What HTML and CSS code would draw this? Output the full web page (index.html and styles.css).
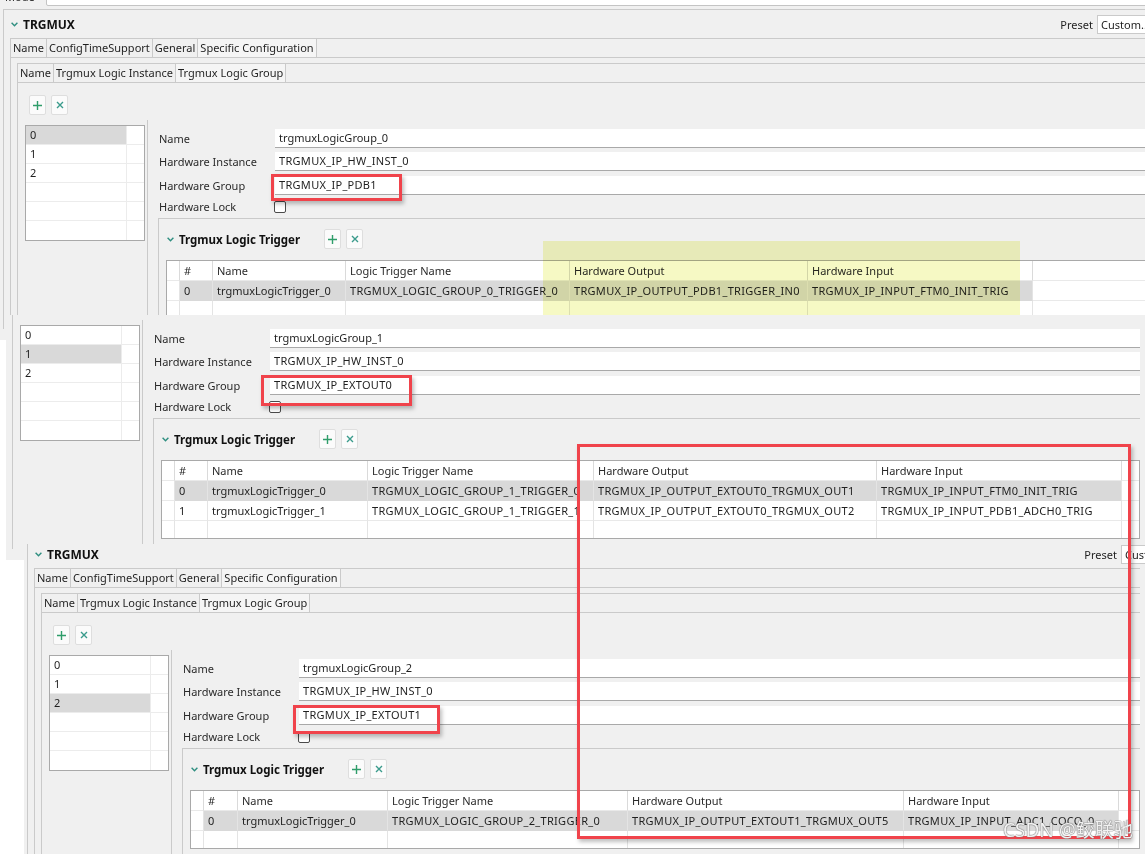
FILE: index.html
```html
<!DOCTYPE html>
<html>
<head>
<meta charset="utf-8">
<link rel="stylesheet" href="styles.css">
</head>
<body>

<!-- Screenshot A -->
<div class="shot shot-a">
  <div class="module">
    <div class="mode-row"><span class="mode-label">Mode</span><div class="mode-input">General Mode</div></div>
    <div class="section">
      <div class="sec-head">
        <svg class="chev" viewBox="0 0 7 5"><polyline points="0.6,0.8 3.5,3.8 6.4,0.8"/></svg>
        <span class="sec-title">TRGMUX</span>
        <span class="preset-label">Preset</span><div class="preset-input">Custom...</div>
      </div>
      <div class="folder">
        <div class="tabs"><span class="tab">Name</span><span class="tab">ConfigTimeSupport</span><span class="tab">General</span><span class="tab sel">Specific Configuration</span></div>
        <div class="folder-body">
          <div class="folder inner">
            <div class="tabs"><span class="tab">Name</span><span class="tab">Trgmux Logic Instance</span><span class="tab sel">Trgmux Logic Group</span></div>
            <div class="folder-body inner-body">
              <div class="tool-btns">
                <span class="tbtn"><svg class="ic-plus" viewBox="0 0 11 11"><path d="M5.5 1V10M1 5.5H10"/></svg></span>
                <span class="tbtn"><svg class="ic-x" viewBox="0 0 8 8"><path d="M1 1L7 7M7 1L1 7"/></svg></span>
              </div>
              <div class="body-row">
                <div class="list">
                  <div class="li sel"><span class="li-a">0</span></div>
                  <div class="li"><span class="li-a">1</span></div>
                  <div class="li"><span class="li-a">2</span></div>
                  <div class="li"><span class="li-a"></span></div>
                  <div class="li"><span class="li-a"></span></div>
                  <div class="li last"><span class="li-a"></span></div>
                </div>
                <div class="vsep"></div>
                <div class="form">
                  <div class="f-row"><span class="f-label">Name</span><div class="f-input">trgmuxLogicGroup_0</div></div>
                  <div class="f-row"><span class="f-label">Hardware Instance</span><div class="f-input cap">TRGMUX_IP_HW_INST_0</div></div>
                  <div class="f-row"><span class="f-label">Hardware Group</span><div class="f-input cap">TRGMUX_IP_PDB1</div></div>
                  <div class="f-row lock"><span class="f-label">Hardware Lock</span><span class="cb"></span></div>
                  <div class="trigger">
                    <div class="trig-head">
                      <svg class="chev" viewBox="0 0 7 5"><polyline points="0.6,0.8 3.5,3.8 6.4,0.8"/></svg>
                      <span class="trig-title">Trgmux Logic Trigger</span>
                      <div class="tool-btns">
                        <span class="tbtn"><svg class="ic-plus" viewBox="0 0 11 11"><path d="M5.5 1V10M1 5.5H10"/></svg></span>
                        <span class="tbtn"><svg class="ic-x" viewBox="0 0 8 8"><path d="M1 1L7 7M7 1L1 7"/></svg></span>
                      </div>
                    </div>
                    <div class="tbl tbl-a">
                      <div class="tr th"><span class="td"></span><span class="td">#</span><span class="td">Name</span><span class="td">Logic Trigger Name</span><span class="td">Hardware Output</span><span class="td">Hardware Input</span><span class="td fill"></span></div>
                      <div class="tr"><span class="td"></span><span class="td hl">0</span><span class="td hl">trgmuxLogicTrigger_0</span><span class="td hl cap">TRGMUX_LOGIC_GROUP_0_TRIGGER_0</span><span class="td hl cap">TRGMUX_IP_OUTPUT_PDB1_TRIGGER_IN0</span><span class="td hl cap">TRGMUX_IP_INPUT_FTM0_INIT_TRIG</span><span class="td fill"></span></div>
                      <div class="tr empty"><span class="td"></span><span class="td"></span><span class="td"></span><span class="td"></span><span class="td"></span><span class="td"></span><span class="td fill"></span></div>
                    </div>
                  </div>
                </div>
              </div>
            </div>
          </div>
        </div>
      </div>
    </div>
  </div>
  <div class="yellow-mark"></div>
</div>

<!-- Screenshot B -->
<div class="shot shot-b">
  <div class="module">
    <div class="mode-row"><span class="mode-label">Mode</span><div class="mode-input">General Mode</div></div>
    <div class="section">
      <div class="sec-head">
        <svg class="chev" viewBox="0 0 7 5"><polyline points="0.6,0.8 3.5,3.8 6.4,0.8"/></svg>
        <span class="sec-title">TRGMUX</span>
        <span class="preset-label">Preset</span><div class="preset-input">Custom...</div>
      </div>
      <div class="folder">
        <div class="tabs"><span class="tab">Name</span><span class="tab">ConfigTimeSupport</span><span class="tab">General</span><span class="tab sel">Specific Configuration</span></div>
        <div class="folder-body">
          <div class="folder inner">
            <div class="tabs"><span class="tab">Name</span><span class="tab">Trgmux Logic Instance</span><span class="tab sel">Trgmux Logic Group</span></div>
            <div class="folder-body inner-body">
              <div class="tool-btns">
                <span class="tbtn"><svg class="ic-plus" viewBox="0 0 11 11"><path d="M5.5 1V10M1 5.5H10"/></svg></span>
                <span class="tbtn"><svg class="ic-x" viewBox="0 0 8 8"><path d="M1 1L7 7M7 1L1 7"/></svg></span>
              </div>
              <div class="body-row">
                <div class="list">
                  <div class="li"><span class="li-a">0</span></div>
                  <div class="li sel"><span class="li-a">1</span></div>
                  <div class="li"><span class="li-a">2</span></div>
                  <div class="li"><span class="li-a"></span></div>
                  <div class="li"><span class="li-a"></span></div>
                  <div class="li last"><span class="li-a"></span></div>
                </div>
                <div class="vsep"></div>
                <div class="form">
                  <div class="f-row"><span class="f-label">Name</span><div class="f-input">trgmuxLogicGroup_1</div></div>
                  <div class="f-row"><span class="f-label">Hardware Instance</span><div class="f-input cap">TRGMUX_IP_HW_INST_0</div></div>
                  <div class="f-row"><span class="f-label">Hardware Group</span><div class="f-input cap">TRGMUX_IP_EXTOUT0</div></div>
                  <div class="f-row lock"><span class="f-label">Hardware Lock</span><span class="cb"></span></div>
                  <div class="trigger">
                    <div class="trig-head">
                      <svg class="chev" viewBox="0 0 7 5"><polyline points="0.6,0.8 3.5,3.8 6.4,0.8"/></svg>
                      <span class="trig-title">Trgmux Logic Trigger</span>
                      <div class="tool-btns">
                        <span class="tbtn"><svg class="ic-plus" viewBox="0 0 11 11"><path d="M5.5 1V10M1 5.5H10"/></svg></span>
                        <span class="tbtn"><svg class="ic-x" viewBox="0 0 8 8"><path d="M1 1L7 7M7 1L1 7"/></svg></span>
                      </div>
                    </div>
                    <div class="tbl tbl-b">
                      <div class="tr th"><span class="td"></span><span class="td">#</span><span class="td">Name</span><span class="td">Logic Trigger Name</span><span class="td">Hardware Output</span><span class="td">Hardware Input</span><span class="td fill"></span></div>
                      <div class="tr"><span class="td"></span><span class="td hl">0</span><span class="td hl">trgmuxLogicTrigger_0</span><span class="td hl cap">TRGMUX_LOGIC_GROUP_1_TRIGGER_0</span><span class="td hl cap">TRGMUX_IP_OUTPUT_EXTOUT0_TRGMUX_OUT1</span><span class="td hl cap">TRGMUX_IP_INPUT_FTM0_INIT_TRIG</span><span class="td fill"></span></div>
                      <div class="tr"><span class="td"></span><span class="td">1</span><span class="td">trgmuxLogicTrigger_1</span><span class="td cap">TRGMUX_LOGIC_GROUP_1_TRIGGER_1</span><span class="td cap">TRGMUX_IP_OUTPUT_EXTOUT0_TRGMUX_OUT2</span><span class="td cap">TRGMUX_IP_INPUT_PDB1_ADCH0_TRIG</span><span class="td fill"></span></div>
                      <div class="tr empty"><span class="td"></span><span class="td"></span><span class="td"></span><span class="td"></span><span class="td"></span><span class="td"></span><span class="td fill"></span></div>
                    </div>
                  </div>
                </div>
              </div>
            </div>
          </div>
        </div>
      </div>
    </div>
  </div>
</div>

<!-- Screenshot C -->
<div class="shot shot-c">
  <div class="module">
    <div class="mode-row"><span class="mode-label">Mode</span><div class="mode-input">General Mode</div></div>
    <div class="section">
      <div class="sec-head">
        <svg class="chev" viewBox="0 0 7 5"><polyline points="0.6,0.8 3.5,3.8 6.4,0.8"/></svg>
        <span class="sec-title">TRGMUX</span>
        <span class="preset-label">Preset</span><div class="preset-input">Custom...</div>
      </div>
      <div class="folder">
        <div class="tabs"><span class="tab">Name</span><span class="tab">ConfigTimeSupport</span><span class="tab">General</span><span class="tab sel">Specific Configuration</span></div>
        <div class="folder-body">
          <div class="folder inner">
            <div class="tabs"><span class="tab">Name</span><span class="tab">Trgmux Logic Instance</span><span class="tab sel">Trgmux Logic Group</span></div>
            <div class="folder-body inner-body">
              <div class="tool-btns">
                <span class="tbtn"><svg class="ic-plus" viewBox="0 0 11 11"><path d="M5.5 1V10M1 5.5H10"/></svg></span>
                <span class="tbtn"><svg class="ic-x" viewBox="0 0 8 8"><path d="M1 1L7 7M7 1L1 7"/></svg></span>
              </div>
              <div class="body-row">
                <div class="list">
                  <div class="li"><span class="li-a">0</span></div>
                  <div class="li"><span class="li-a">1</span></div>
                  <div class="li sel"><span class="li-a">2</span></div>
                  <div class="li"><span class="li-a"></span></div>
                  <div class="li"><span class="li-a"></span></div>
                  <div class="li last"><span class="li-a"></span></div>
                </div>
                <div class="vsep"></div>
                <div class="form">
                  <div class="f-row"><span class="f-label">Name</span><div class="f-input">trgmuxLogicGroup_2</div></div>
                  <div class="f-row"><span class="f-label">Hardware Instance</span><div class="f-input cap">TRGMUX_IP_HW_INST_0</div></div>
                  <div class="f-row"><span class="f-label">Hardware Group</span><div class="f-input cap">TRGMUX_IP_EXTOUT1</div></div>
                  <div class="f-row lock"><span class="f-label">Hardware Lock</span><span class="cb"></span></div>
                  <div class="trigger">
                    <div class="trig-head">
                      <svg class="chev" viewBox="0 0 7 5"><polyline points="0.6,0.8 3.5,3.8 6.4,0.8"/></svg>
                      <span class="trig-title">Trgmux Logic Trigger</span>
                      <div class="tool-btns">
                        <span class="tbtn"><svg class="ic-plus" viewBox="0 0 11 11"><path d="M5.5 1V10M1 5.5H10"/></svg></span>
                        <span class="tbtn"><svg class="ic-x" viewBox="0 0 8 8"><path d="M1 1L7 7M7 1L1 7"/></svg></span>
                      </div>
                    </div>
                    <div class="tbl tbl-c">
                      <div class="tr th"><span class="td"></span><span class="td">#</span><span class="td">Name</span><span class="td">Logic Trigger Name</span><span class="td">Hardware Output</span><span class="td">Hardware Input</span><span class="td fill"></span></div>
                      <div class="tr"><span class="td"></span><span class="td hl">0</span><span class="td hl">trgmuxLogicTrigger_0</span><span class="td hl cap">TRGMUX_LOGIC_GROUP_2_TRIGGER_0</span><span class="td hl cap">TRGMUX_IP_OUTPUT_EXTOUT1_TRGMUX_OUT5</span><span class="td hl cap">TRGMUX_IP_INPUT_ADC1_COCO_0</span><span class="td fill"></span></div>
                      <div class="tr empty"><span class="td"></span><span class="td"></span><span class="td"></span><span class="td"></span><span class="td"></span><span class="td"></span><span class="td fill"></span></div>
                    </div>
                  </div>
                </div>
              </div>
            </div>
          </div>
        </div>
      </div>
    </div>
  </div>
</div>

<!-- Annotations -->
<div class="redbox rb-1"></div>
<div class="redbox rb-2"></div>
<div class="redbox rb-3"></div>
<div class="redbox rb-4"></div>
<div class="watermark">CSDN @鲛联驰</div>

</body>
</html>
```

FILE: styles.css
```css
* { box-sizing: border-box; margin: 0; padding: 0; }

body {
  width: 1145px;
  height: 854px;
  position: relative;
  overflow: hidden;
  background: #ffffff;
  font-family: "Noto Sans", "Open Sans", sans-serif;
}

/* screenshot windows on the canvas */
.shot {
  position: absolute;
  overflow: hidden;
  background: #f0f0f0;
}
.shot-a { left: 0; top: 0; width: 1145px; height: 340px; }
.shot-b { left: 6px; top: 315px; width: 1139px; height: 245px; }
.shot-c { left: 24px; top: 544px; width: 1121px; height: 310px; }

.module {
  width: 1170px;
  font-size: 11px;
  color: #1f1f1f;
  white-space: nowrap;
}
.shot-a .module { margin: -14px 0 0 0; }
.shot-b .module { margin: -129px 0 0 -11px; width: 1145px; }
.shot-c .module { margin: -28px 0 0 0; width: 1116px; }
.shot-c .sec-head { margin-right: -54px; }

/* parts of a screenshot that lie wholly outside its visible crop */
.shot-b .mode-row,
.shot-b .sec-head,
.shot-b .tabs,
.shot-b .inner-body > .tool-btns,
.shot-c .mode-row { visibility: hidden; }

/* mode row */
.mode-row { display: flex; align-items: center; height: 20px; }
.mode-label { width: 46px; padding-left: 5px; }
.mode-input {
  flex: 1;
  height: 20px;
  background: #fff;
  border: 1px solid #c4c4c4;
  border-radius: 2px;
  padding-left: 6px;
  line-height: 18px;
}

/* section */
.section {
  margin: 3px 0 0 3px;
  border-top: 1px solid #cacaca;
  border-left: 1px solid #cacaca;
}
.sec-head {
  display: flex;
  align-items: center;
  height: 28px;
  padding-left: 7px;
}
.chev {
  width: 7px;
  height: 5px;
  margin-right: 5px;
  flex: none;
  fill: none;
  stroke: #2f8f80;
  stroke-width: 1.4;
}
.sec-title { font-weight: 700; font-size: 12px; color: #111; }
.preset-label { margin-left: auto; margin-right: 4px; }
.preset-input {
  width: 73px;
  height: 19px;
  background: #fff;
  border: 1px solid #cacaca;
  padding-left: 3px;
  line-height: 17px;
  overflow: hidden;
}

/* tab folders */
.folder { margin-left: 6px; }
.folder.inner { margin-left: 0; }
.tabs {
  display: flex;
  height: 20px;
  border-top: 1px solid #cacaca;
  border-bottom: 1px solid #cacaca;
}
.tab {
  border-left: 1px solid #cacaca;
  padding: 0 2px;
  line-height: 18px;
}
.tab:last-child { border-right: 1px solid #cacaca; }
.tab.sel { background: #f5f5f5; }
.folder-body {
  border-left: 1px solid #cacaca;
  padding: 5px 0 0 6px;
}
.inner-body { padding: 12px 0 0 0; }

/* small tool buttons */
.tool-btns { display: flex; gap: 5px; margin-left: 11px; }
.tbtn {
  width: 17px;
  height: 20px;
  background: #fbfbfb;
  border: 1px solid #dedede;
  border-radius: 2px;
  display: flex;
  align-items: center;
  justify-content: center;
}
.ic-plus { width: 11px; height: 11px; fill: none; stroke: #2f9d6a; stroke-width: 1.4; }
.ic-x { width: 8px; height: 8px; fill: none; stroke: #3a9b8c; stroke-width: 1.4; }

/* body row */
.body-row {
  display: flex;
  align-items: flex-start;
  margin: 10px 0 0 7px;
}
.list {
  flex: none;
  width: 120px;
  height: 116px;
  border: 1px solid #a9a9a9;
  background: #fff;
}
.li {
  display: flex;
  height: 19px;
  border-bottom: 1px solid #ececec;
}
.li.last { border-bottom: none; }
.li-a {
  width: 101px;
  border-right: 1px solid #ececec;
  padding-left: 4px;
  line-height: 18px;
}
.li.sel .li-a { background: #d9d9d9; }

.vsep {
  align-self: stretch;
  flex: none;
  width: 1px;
  background: #cacaca;
  margin: -5px 0 0 2px;
}

/* form */
.form { flex: 1; margin-left: 10px; padding-top: 4px; min-width: 0; }
.f-row {
  display: flex;
  align-items: center;
  height: 19px;
  margin-bottom: 5px;
}
.f-row:first-child { margin-bottom: 4px; }
.f-row.lock { height: 13px; }
.f-label { width: 117px; flex: none; padding-left: 1px; color: #2a2a2a; }
.f-input {
  flex: 1;
  height: 19px;
  background: #fff;
  border-bottom: 1px solid #a9a9a9;
  padding-left: 4px;
  line-height: 18px;
}
.cap { letter-spacing: 0.3px; }
.cb {
  width: 12px;
  height: 12px;
  margin-left: -1px;
  border: 1px solid #4a4a4a;
  border-radius: 2px;
  background: #fff;
}

/* trigger group */
.trigger {
  border-top: 1px solid #cacaca;
  border-left: 1px solid #cacaca;
  padding: 10px 0 10px 0;
}
.trig-head {
  display: flex;
  align-items: center;
  height: 20px;
  padding-left: 8px;
}
.trig-title { font-weight: 700; font-size: 11.5px; color: #111; }
.trig-head .tool-btns { margin-left: 24px; }

/* tables */
.tbl {
  margin: 11px 0 0 7px;
  border: 1px solid #a9a9a9;
  background: #fff;
}
.tr { display: grid; height: 20px; }
.tbl-a .tr { grid-template-columns: 13px 33px 133px 224px 238px 225px 1fr; }
.tbl-b .tr { grid-template-columns: 13px 33px 160px 226px 283px 245px 1fr; }
.tbl-c .tr { grid-template-columns: 13px 34px 150px 240px 276px 215px 1fr; }
.td {
  border-right: 1px solid #e4e4e4;
  border-bottom: 1px solid #e9e9e9;
  padding-left: 4px;
  line-height: 19px;
  overflow: hidden;
  color: #1f1f1f;
}
.td.fill { border-right: none; }
.th .td { color: #2a2a2a; border-right-color: #dadada; }
.td.hl { background: #d9d9d9; border-bottom-color: #d9d9d9; }
.tr.empty { height: 17px; }
.tr.empty .td { border-bottom: none; }

/* annotations */
.yellow-mark {
  position: absolute;
  left: 543px;
  top: 241px;
  width: 477px;
  height: 80px;
  background: #f6f9c4;
  mix-blend-mode: multiply;
}
.redbox {
  position: absolute;
  border: 3px solid #f0434b;
  box-shadow: 2px 3px 4px rgba(0, 0, 0, 0.25);
}
.rb-1 { left: 271px; top: 174px; width: 131px; height: 27px; }
.rb-2 { left: 261px; top: 375px; width: 151px; height: 31px; }
.rb-3 { left: 293px; top: 705px; width: 147px; height: 29px; }
.rb-4 { left: 577px; top: 444px; width: 554px; height: 395px; }

.watermark {
  position: absolute;
  left: 1003px;
  top: 815px;
  font-family: "Noto Sans", "Noto Sans CJK SC", sans-serif;
  font-size: 19px;
  color: rgba(255, 255, 255, 0.9);
  text-shadow: 0 0 1px #7a7a7a, 0 0 1px #7a7a7a, 0 0 1px #7a7a7a;
  white-space: nowrap;
}
```
